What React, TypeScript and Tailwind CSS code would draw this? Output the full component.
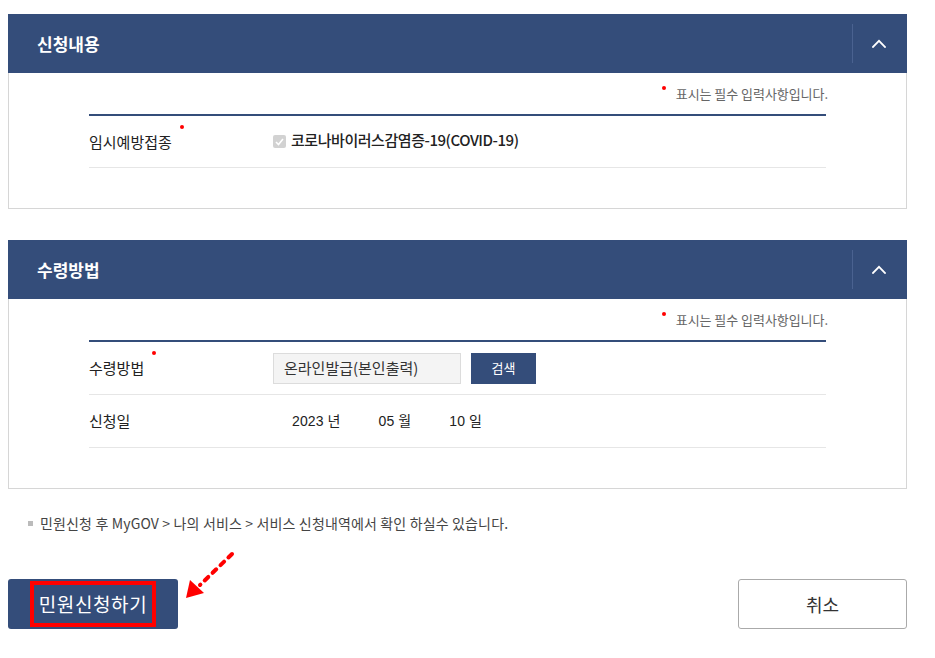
import React from "react";

function Dot({ className = "" }: { className?: string }) {
  return <span className={"inline-block w-[4px] h-[4px] rounded-full bg-[#f00] " + className} />;
}

function Chevron() {
  return (
    <svg width="14" height="9" viewBox="0 0 14 9" fill="none">
      <polyline points="1,8 7,1.8 13,8" stroke="#fff" strokeWidth="1.8" strokeLinecap="square" />
    </svg>
  );
}

function Section({ title, children }: { title: string; children: React.ReactNode }) {
  return (
    <section>
      <div className="h-[59px] bg-[#344d7a] flex items-center">
        <h2 className="flex-1 pl-[29px] text-white text-[17px] leading-[20px] font-bold">{title}</h2>
        <div className="w-px h-[39px] bg-[#4a6290]" />
        <div className="w-[54px] h-full flex items-center justify-center pr-[2px]">
          <Chevron />
        </div>
      </div>
      <div className="border border-t-0 border-[#d6d6d6] px-[80px] pt-[10px] pb-[40px]">
        <div className="flex justify-end items-center h-[22px] text-[13px] text-[#666] -mr-[2px] tracking-[-0.05px]">
          <Dot className="relative -top-[6px] mr-[10px]" />
          표시는 필수 입력사항입니다.
        </div>
        <div className="mt-[9px] border-t-2 border-[#344d7a]">{children}</div>
      </div>
    </section>
  );
}

function Row({ label, required, children, h = "h-[52px]" }: { label: string; required?: boolean; children: React.ReactNode; h?: string }) {
  return (
    <div className={"flex items-center border-b border-[#e6e6e6] " + h}>
      <div className="w-[184px] text-[15px] leading-[20px] text-[#222]">
        <span className="relative">
          {label}
          {required && <span className="absolute -right-[12px] -top-[6px] w-[4px] h-[4px] rounded-full bg-[#f00]" />}
        </span>
      </div>
      <div className="flex-1 flex items-center">{children}</div>
    </div>
  );
}

export default function App() {
  return (
    <div className="relative w-[935px] h-[658px] bg-white font-['Noto_Sans_CJK_KR',sans-serif] overflow-hidden">
      <div className="pl-[8px] pt-[14px] w-[907px]">
        <Section title="신청내용">
          <Row label="임시예방접종" required h="h-[52px]">
            <span className="w-[13px] h-[13px] rounded-[2px] bg-[#d2d2d2] flex items-center justify-center">
              <svg width="9" height="8" viewBox="0 0 9 8" fill="none">
                <polyline points="1,4 3.5,6.5 8,1" stroke="#fff" strokeWidth="1.6" />
              </svg>
            </span>
            <span className="ml-[5px] text-[15px] leading-[20px] font-medium text-[#222] tracking-[-0.45px] -mt-[4px]">
              코로나바이러스감염증-19(COVID-19)
            </span>
          </Row>
        </Section>

        <div className="h-[31px]" />

        <Section title="수령방법">
          <Row label="수령방법" required h="h-[53px]">
            <div className="w-[188px] h-[31px] bg-[#f4f4f4] border border-[#dcdcdc] flex items-center pl-[10px] text-[15px] text-[#333]">
              온라인발급(본인출력)
            </div>
            <button className="ml-[10px] w-[65px] h-[31px] bg-[#344d7a] text-white text-[13px] flex items-center justify-center">
              검색
            </button>
          </Row>
          <Row label="신청일" h="h-[53px]">
            <div className="pl-[19px] flex items-center gap-[38px] text-[14px] text-[#222] font-['Liberation_Sans','Noto_Sans_CJK_KR',sans-serif] tracking-[0.1px]">
              <span>2023 년</span>
              <span>05 월</span>
              <span>10 일</span>
            </div>
          </Row>
        </Section>

        <div className="mt-[24px] h-[20px] flex items-center pl-[20px] text-[14px] text-[#444] tracking-[0.15px]">
          <span className="w-[5px] h-[5px] bg-[#bbb] mr-[7px]" />
          민원신청 후 MyGOV &gt; 나의 서비스 &gt; 서비스 신청내역에서 확인 하실수 있습니다.
        </div>

        <div className="mt-[46px] flex justify-between">
          <button className="w-[170px] h-[50px] bg-[#344d7a] rounded-[3px] flex items-center justify-center">
            <span className="h-[46px] border-4 border-[#f00] px-[5px] flex items-center text-white text-[19px] tracking-[0.6px]">
              민원신청하기
            </span>
          </button>
          <button className="w-[169px] h-[50px] bg-white border border-[#aaa] rounded-[3px] flex items-center justify-center text-[18px] text-[#333]">
            취소
          </button>
        </div>
      </div>

      <svg className="absolute left-0 top-0 pointer-events-none" width="935" height="658">
        <line x1="232" y1="554" x2="200" y2="585" stroke="#f00" strokeWidth="4" strokeLinecap="round" strokeDasharray="5 6" />
        <polygon points="186,598 190,580 204,593" fill="#f00" />
      </svg>
    </div>
  );
}
